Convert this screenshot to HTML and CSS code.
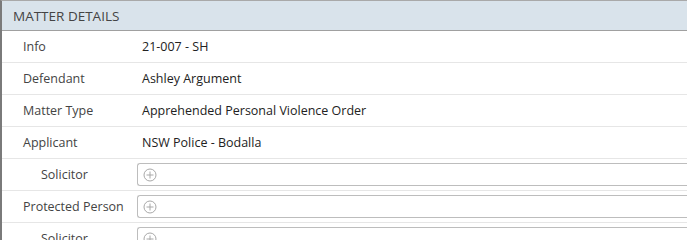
FILE: index.html
```html
<!DOCTYPE html>
<html>
<head>
<meta charset="utf-8">
<link rel="stylesheet" href="styles.css">
</head>
<body>
<div class="panel">
  <div class="panel-header">MATTER DETAILS</div>
  <div class="row"><div class="label">Info</div><div class="value">21-007 - SH</div></div>
  <div class="row"><div class="label">Defendant</div><div class="value">Ashley Argument</div></div>
  <div class="row"><div class="label">Matter Type</div><div class="value">Apprehended Personal Violence Order</div></div>
  <div class="row"><div class="label">Applicant</div><div class="value">NSW Police - Bodalla</div></div>
  <div class="row"><div class="label sub">Solicitor</div><div class="value"><div class="picker"><svg class="plus" width="14" height="14" viewBox="0 0 14 14"><circle cx="7" cy="7" r="6" fill="none" stroke="#a8a8a8" stroke-width="1"/><path d="M7 3.5v7M3.5 7h7" stroke="#a8a8a8" stroke-width="1"/></svg></div></div></div>
  <div class="row"><div class="label">Protected Person</div><div class="value"><div class="picker"><svg class="plus" width="14" height="14" viewBox="0 0 14 14"><circle cx="7" cy="7" r="6" fill="none" stroke="#a8a8a8" stroke-width="1"/><path d="M7 3.5v7M3.5 7h7" stroke="#a8a8a8" stroke-width="1"/></svg></div></div></div>
  <div class="row"><div class="label sub">Solicitor</div><div class="value"><div class="picker"><svg class="plus" width="14" height="14" viewBox="0 0 14 14"><circle cx="7" cy="7" r="6" fill="none" stroke="#a8a8a8" stroke-width="1"/><path d="M7 3.5v7M3.5 7h7" stroke="#a8a8a8" stroke-width="1"/></svg></div></div></div>
</div>
</body>
</html>
```
FILE: styles.css
```css
html, body {
  margin: 0;
  padding: 0;
  background: #fff;
  overflow: hidden;
}
body {
  font-family: "Open Sans", "Noto Sans", sans-serif;
  font-size: 12.5px;
  color: #222;
}
.panel {
  width: 720px;
  border-top: 1px solid #a9a9a9;
  border-left: 2px solid #7a7a7a;
}
.panel-header {
  height: 29px;
  background: #d9e3eb;
  border-bottom: 1px solid #a0a0a0;
  padding-left: 11px;
  color: #444;
  font-size: 13.5px;
  line-height: 30px;
}
.row {
  display: flex;
  align-items: center;
  height: 31px;
  border-bottom: 1px solid #e6e6e6;
}
.label {
  width: 114px;
  padding-left: 21px;
  color: #444;
}
.label.sub {
  padding-left: 39px;
  width: 96px;
}
.value {
  flex: 1;
  padding-left: 5px;
  color: #222;
}
.picker {
  height: 21px;
  margin-left: -5px;
  border: 1px solid #bdbdbd;
  border-right: none;
  border-radius: 3px 0 0 3px;
  display: flex;
  align-items: center;
  padding-left: 5px;
}
.plus {
  display: block;
}
```
